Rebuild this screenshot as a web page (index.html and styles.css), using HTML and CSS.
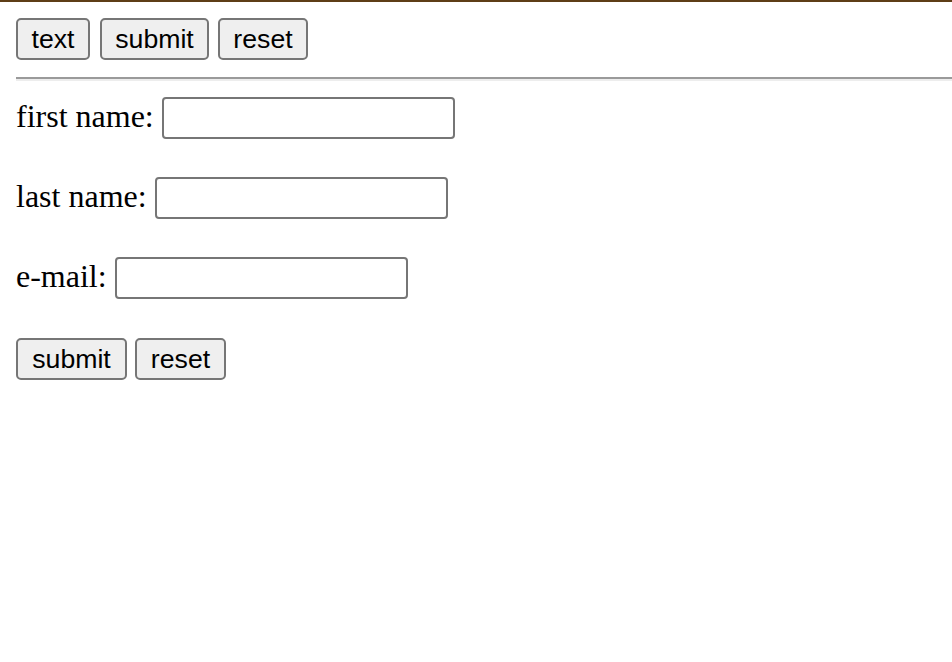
FILE: index.html
```html
<!DOCTYPE html>
<html>
<head>
<meta charset="utf-8">
<link rel="stylesheet" href="styles.css">
</head>
<body>
<div class="topbar"></div>
<div class="page">
  <div class="toolbar">
    <button class="btn btn-text" type="button">text</button>
    <button class="btn btn-submit" type="button">submit</button>
    <button class="btn btn-reset" type="button">reset</button>
  </div>
  <div class="rule"></div>
  <form class="form">
    <div class="row"><label class="label">first name:</label><input class="field" type="text"></div>
    <div class="row"><label class="label">last name:</label><input class="field" type="text"></div>
    <div class="row"><label class="label">e-mail:</label><input class="field" type="text"></div>
    <div class="row actions">
      <button class="btn btn-submit2" type="button">submit</button>
      <button class="btn btn-reset2" type="button">reset</button>
    </div>
  </form>
</div>
</body>
</html>
```
FILE: styles.css
```css
html, body {
  margin: 0;
  padding: 0;
  background: #ffffff;
}
body {
  font-family: "Liberation Serif", "Times New Roman", serif;
  font-size: 32px;
  color: #000000;
  overflow: hidden;
}
.topbar {
  height: 2px;
  background: #5e3d16;
}
.page {
  padding: 16px 0 0 16px;
}
.toolbar {
  display: flex;
  height: 42px;
  gap: 9px;
}
.btn {
  box-sizing: border-box;
  height: 42px;
  padding: 0;
  margin: 0;
  border: 2px solid #767676;
  border-radius: 5px;
  background: #efefef;
  font-family: "Liberation Sans", Arial, sans-serif;
  font-size: 26.67px;
  color: #000000;
  text-align: center;
}
.btn-text { width: 74px; margin-right: 1px; }
.btn-submit { width: 109px; }
.btn-reset { width: 90px; }
.btn-submit2 { width: 111px; }
.btn-reset2 { width: 91px; }
.rule {
  margin-top: 17px;
  height: 0;
  border-top: 2px solid #9a9a9a;
  border-bottom: 2px solid #ededed;
}
.form {
  margin: 16px 0 0 0;
  display: flex;
  flex-direction: column;
  gap: 38px;
}
.row {
  display: flex;
  align-items: center;
  gap: 8px;
  height: 42px;
}
.label {
  white-space: nowrap;
  line-height: 1.15;
  padding-bottom: 3px;
}
.field {
  box-sizing: border-box;
  width: 293px;
  height: 42px;
  margin: 0;
  padding: 2px 4px;
  border: 2px solid #767676;
  border-radius: 4px;
  background: #ffffff;
  font-family: "Liberation Sans", Arial, sans-serif;
  font-size: 26.67px;
}
.actions {
  margin-top: 1px;
}
```
